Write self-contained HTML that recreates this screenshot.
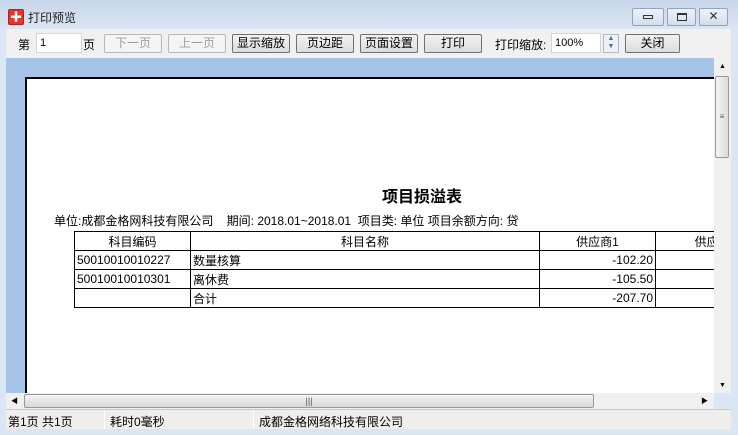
<!DOCTYPE html>
<html><head><meta charset="utf-8"><style>
*{margin:0;padding:0;box-sizing:border-box}
body{width:738px;height:435px;overflow:hidden;background:#dbe6f4;font-family:"Liberation Sans","WenQuanYi Zen Hei","Noto Sans CJK SC",sans-serif;font-size:12px;color:#000;position:relative}
.abs{position:absolute}
#title{left:0;top:0;width:738px;height:29px;background:linear-gradient(#c6d5e9,#dbe6f4)}
.wb{position:absolute;top:8px;height:18px;border:1px solid #8fa3bf;border-radius:2px;background:linear-gradient(#eef3fa,#d3deec)}
#tb{left:6px;top:29px;width:725px;height:29px;background:#f0f0f0}
.btn{position:absolute;top:34px;height:19px;border:1px solid #707070;border-radius:2px;background:linear-gradient(#f2f2f2,#dcdcdc);text-align:center;line-height:17px;font-size:12px}
.dis{color:#a0a0a0;border-color:#b8b8b8;background:#f4f4f4}
.inp{position:absolute;top:33px;height:20px;background:#fff;border:1px solid #cfd6e0;line-height:18px;padding-left:3px;font-size:11px}
#area{left:6px;top:58px;width:708px;height:335px;background:#a5c4e8;overflow:hidden}
#page{position:absolute;left:19px;top:19px;width:720px;height:340px;background:#fff;border-left:2px solid #000;border-top:2px solid #000}
table{border-collapse:collapse;position:absolute;left:47px;top:152px;font-size:12px}
td{border:1px solid #000;height:19px;padding:0 2px;white-space:nowrap}
#vs{left:714px;top:58px;width:17px;height:335px;background:#f0f0f0}
#hs{left:6px;top:393px;width:708px;height:16px;background:#f0f0f0}
#sb{left:6px;top:409px;width:725px;height:20px;background:#f0eeec;border-top:1px solid #c9c9c9}
</style></head><body>
<div class="abs" id="title"></div>
<div class="abs" style="left:8px;top:9px;width:16px;height:16px;background:#e3352b;border:1px solid #b0241c;border-radius:2px;color:#fff;font-size:12px;line-height:14px;text-align:center">✚</div>
<div class="abs" style="left:28px;top:9px;font-size:12px;color:#222">打印预览</div>
<div class="wb" style="left:632px;width:32px"><div style="margin:6px auto 0;width:10px;height:4px;border:1px solid #333"></div></div>
<div class="wb" style="left:667px;width:29px"><div style="margin:4px auto 0;width:10px;height:8px;border:1px solid #333;border-top-width:2px"></div></div>
<div class="wb" style="left:699px;width:29px;text-align:center;line-height:15px;color:#333">✕</div>
<div class="abs" id="tb"></div>
<div class="abs" style="left:18px;top:36px">第</div>
<div class="inp" style="left:36px;width:46px">1</div>
<div class="abs" style="left:83px;top:36px">页</div>
<div class="btn dis" style="left:104px;width:58px">下一页</div>
<div class="btn dis" style="left:168px;width:58px">上一页</div>
<div class="btn" style="left:232px;width:58px">显示缩放</div>
<div class="btn" style="left:296px;width:58px">页边距</div>
<div class="btn" style="left:360px;width:58px">页面设置</div>
<div class="btn" style="left:424px;width:58px">打印</div>
<div class="abs" style="left:495px;top:36px">打印缩放:</div>
<div class="inp" style="left:551px;width:50px">100%</div>
<div class="abs" style="left:603px;top:34px;width:16px;height:19px;border:1px solid #b0b8c4;background:#eef1f5;font-size:7px;line-height:8px;text-align:center;color:#4a6a9a">▲<br>▼</div>
<div class="btn" style="left:625px;width:55px">关闭</div>
<div class="abs" id="area"><div id="page">
<div style="position:absolute;left:355px;top:104px;font-size:16px;font-weight:bold">项目损溢表</div>
<div style="position:absolute;left:27px;top:133px;font-size:12px">单位:成都金格网科技有限公司&nbsp;&nbsp;&nbsp;&nbsp;期间: 2018.01~2018.01&nbsp;&nbsp;项目类: 单位 项目余额方向: 贷</div>
<table>
<tr><td style="width:116px;text-align:center">科目编码</td><td style="width:349px;text-align:center">科目名称</td><td style="width:116px;text-align:center">供应商1</td><td style="width:80px">&nbsp;&nbsp;&nbsp;&nbsp;&nbsp;&nbsp;&nbsp;&nbsp;&nbsp;&nbsp;&nbsp;供应</td></tr>
<tr><td>50010010010227</td><td>数量核算</td><td style="text-align:right">-102.20</td><td></td></tr>
<tr><td>50010010010301</td><td>离休费</td><td style="text-align:right">-105.50</td><td></td></tr>
<tr><td></td><td>合计</td><td style="text-align:right">-207.70</td><td></td></tr>
</table></div></div>
<div class="abs" id="vs">
<div style="text-align:center;font-size:7px;margin-top:5px">▲</div>
<div style="position:absolute;left:1px;top:18px;width:14px;height:82px;border:1px solid #999;border-radius:2px;background:linear-gradient(90deg,#f4f4f4,#dcdcdc);text-align:center;line-height:80px;font-size:8px;color:#555">≡</div>
<div style="position:absolute;bottom:4px;width:17px;text-align:center;font-size:7px">▼</div>
</div>
<div class="abs" id="hs">
<div style="position:absolute;left:5px;top:3px;font-size:7px">◀</div>
<div style="position:absolute;left:18px;top:1px;width:570px;height:14px;border:1px solid #999;border-radius:2px;background:linear-gradient(#f4f4f4,#d8d8d8);text-align:center;font-size:9px;line-height:12px;color:#555">|||</div>
<div style="position:absolute;left:695px;top:3px;font-size:7px">▶</div>
</div>
<div class="abs" id="sb">
<span style="position:absolute;left:2px;top:3px">第1页 共1页</span>
<span style="position:absolute;left:98px;top:0;height:19px;border-left:1px solid #fff"></span>
<span style="position:absolute;left:104px;top:3px">耗时0毫秒</span>
<span style="position:absolute;left:247px;top:0;height:19px;border-left:1px solid #fff"></span>
<span style="position:absolute;left:253px;top:3px">成都金格网络科技有限公司</span>
</div>
</body></html>
